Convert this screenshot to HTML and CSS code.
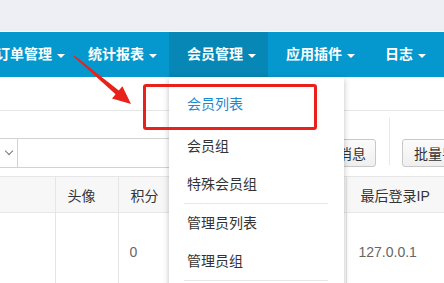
FILE: index.html
```html
<!DOCTYPE html>
<html lang="zh-CN">
<head>
<meta charset="utf-8">
<title>会员列表</title>
<link rel="stylesheet" href="styles.css">
</head>
<body>
<div class="topbar"></div>
<nav class="nav">
  <ul class="nav-list">
    <li class="nav-item first">订单管理<span class="caret"></span></li>
    <li class="nav-item">统计报表<span class="caret"></span></li>
    <li class="nav-item active">会员管理<span class="caret"></span></li>
    <li class="nav-item">应用插件<span class="caret"></span></li>
    <li class="nav-item">日志<span class="caret"></span></li>
  </ul>
</nav>
<main class="content">
  <div class="toolbar">
    <div class="select"><span class="chev"></span></div>
    <div class="input"></div>
    <button class="btn btn-msg">发送消息</button>
    <div class="divider"></div>
    <button class="btn btn-batch">批量导出</button>
  </div>
  <table class="table">
    <thead>
      <tr>
        <th class="c1"></th>
        <th class="c2">头像</th>
        <th class="c3">积分</th>
        <th class="c4"></th>
        <th class="c5">最后登录IP</th>
      </tr>
    </thead>
    <tbody>
      <tr>
        <td></td>
        <td></td>
        <td class="num">0</td>
        <td></td>
        <td>127.0.0.1</td>
      </tr>
    </tbody>
  </table>
</main>
<ul class="dropdown">
  <li class="dd-item current">会员列表</li>
  <li class="dd-item tall">会员组</li>
  <li class="dd-item">特殊会员组</li>
  <li class="dd-sep"></li>
  <li class="dd-item">管理员列表</li>
  <li class="dd-item">管理员组</li>
  <li class="dd-sep"></li>
</ul>
<div class="highlight"></div>
<svg class="arrow" width="444" height="283" viewBox="0 0 444 283">
  <polygon points="73.6,56.5 74.4,55.5 118.8,90.5 122.4,86.3 131,104 112,98.5 115.6,94.3" fill="#e8221b"/>
</svg>
</body>
</html>
```

FILE: styles.css
```css
* { box-sizing: border-box; }
html, body { margin: 0; padding: 0; }
body {
  width: 444px;
  height: 283px;
  overflow: hidden;
  position: relative;
  background: #fff;
  font-family: "Liberation Sans", "Noto Sans CJK SC", sans-serif;
  font-size: 14px;
  color: #333;
}
.topbar {
  height: 32px;
  background: #eeeff4;
  border-bottom: 1px solid #f8f8fa;
}
.nav {
  height: 45px;
  background: #0598cf;
  overflow: hidden;
}
.nav-list {
  list-style: none;
  margin: 0 0 0 -22px;
  padding: 0;
  display: flex;
  white-space: nowrap;
}
.nav-item {
  flex: none;
  height: 45px;
  line-height: 45px;
  padding: 0 12px 0 18px;
  color: #fff;
  font-weight: bold;
  display: flex;
  align-items: center;
}
.nav-item.first { padding-right: 5px; }
.nav-item.active { background: #0787b5; }
.caret {
  width: 0;
  height: 0;
  margin-left: 5px;
  border-left: 4px solid transparent;
  border-right: 4px solid transparent;
  border-top: 4px solid #fff;
  margin-top: 2px;
}
.content {
  padding-top: 33px;
}
.toolbar {
  border-top: 1px solid #e6e6e6;
  height: 66px;
  display: flex;
  align-items: flex-start;
  padding-top: 27px;
}
.select {
  flex: none;
  width: 58px;
  height: 30px;
  margin-left: -40px;
  border: 1px solid #d2d2d2;
  display: flex;
  align-items: center;
  justify-content: flex-end;
  padding-right: 5px;
}
.chev {
  width: 6px;
  height: 6px;
  border-right: 1.5px solid #777;
  border-bottom: 1.5px solid #777;
  transform: rotate(45deg);
  margin-top: -4px;
}
.input {
  flex: none;
  width: 282px;
  height: 30px;
  border: 1px solid #d2d2d2;
  border-left: none;
}
.btn {
  flex: none;
  height: 28px;
  margin-top: 1px;
  border: 1px solid #c8c8c8;
  border-radius: 3px;
  background: linear-gradient(#fbfbfb, #efefef);
  color: #333;
  font: inherit;
  padding: 0 9px;
}
.divider {
  flex: none;
  width: 1px;
  height: 47px;
  margin: -20px 12px 0 13px;
  background: #e8e8e8;
}
.btn-batch { padding: 0 11px; }
.table {
  border-collapse: collapse;
  table-layout: fixed;
  width: 520px;
}
.table th, .table td {
  border: 1px solid #e6e6e6;
  text-align: left;
  padding: 0 12px;
  font-weight: normal;
  white-space: nowrap;
  overflow: hidden;
}
.table th {
  height: 36px;
  background: #f7f7f7;
  color: #333;
}
.table td {
  height: 78px;
  color: #666;
}
.table td.num { padding-left: 11px; }
.table tr > :first-child { border-left: none; }
.c1 { width: 55px; }
.c2 { width: 63px; }
.c3 { width: 60px; }
.c4 { width: 168px; }
.c5 { width: 174px; padding-left: 14px !important; }
.dropdown {
  position: absolute;
  left: 169px;
  top: 77px;
  width: 175px;
  height: 230px;
  margin: 0;
  padding: 8px 0 0;
  list-style: none;
  background: #fff;
  box-shadow: 0 2px 6px rgba(0,0,0,0.25);
}
.dd-item {
  height: 38px;
  line-height: 38px;
  padding-left: 18px;
  color: #333;
}
.dd-item.tall { height: 42px; line-height: 46px; }
.dd-item.current { color: #1a8bd0; }
.dd-sep {
  height: 1px;
  margin: 0 16px 0 15px;
  background: #e8e8e8;
}
.highlight {
  position: absolute;
  left: 143px;
  top: 84px;
  width: 174px;
  height: 46px;
  border: 3px solid #e8221b;
  border-radius: 3px;
}
.arrow {
  position: absolute;
  left: 0;
  top: 0;
  pointer-events: none;
}
```
